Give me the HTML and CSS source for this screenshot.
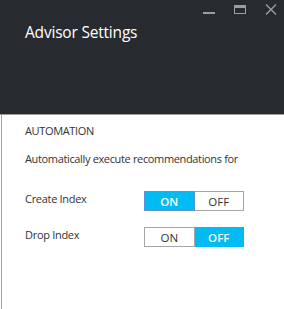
FILE: index.html
```html
<!DOCTYPE html>
<html>
<head>
<meta charset="utf-8">
<link rel="stylesheet" href="styles.css">
</head>
<body>
<div class="blade">
  <header class="head">
    <div class="controls">
      <svg class="ctl" width="14" height="16" viewBox="0 0 14 16"><rect x="1" y="12" width="12" height="2" fill="#9a9da1"/></svg>
      <svg class="ctl" width="14" height="16" viewBox="0 0 14 16"><rect x="1.5" y="5.5" width="11" height="8" fill="none" stroke="#9a9da1"/><rect x="1" y="5" width="12" height="3" fill="#9a9da1"/></svg>
      <svg class="ctl" width="14" height="16" viewBox="0 0 14 16"><path d="M2 4.5 L12 14.5 M12 4.5 L2 14.5" stroke="#9a9da1" stroke-width="1.4"/></svg>
    </div>
    <h1 class="title">Advisor Settings</h1>
  </header>
  <main class="content">
    <div class="section">AUTOMATION</div>
    <p class="desc">Automatically execute recommendations for</p>
    <div class="row">
      <span class="label">Create Index</span>
      <div class="toggle">
        <span class="opt on focus">ON</span>
        <span class="opt">OFF</span>
      </div>
    </div>
    <div class="row">
      <span class="label">Drop Index</span>
      <div class="toggle">
        <span class="opt">ON</span>
        <span class="opt on">OFF</span>
      </div>
    </div>
  </main>
</div>
</body>
</html>
```
FILE: styles.css
```css
html, body {
  margin: 0;
  padding: 0;
  background: #fff;
}
body {
  font-family: "Open Sans", "Noto Sans", sans-serif;
  width: 284px;
  height: 309px;
  overflow: hidden;
}
.blade {
  height: 309px;
  margin-left: 1px;
  border-left: 1px solid #a3a3a3;
  display: flex;
  flex-direction: column;
}
.head {
  background: #272b30;
  height: 114px;
  margin-left: -2px;
  padding-left: 2px;
  border-bottom: 1px solid #9c9c9c;
  box-sizing: content-box;
  position: relative;
}
.controls {
  position: absolute;
  top: 0;
  right: 6px;
  display: flex;
  gap: 17px;
}
.ctl { display: block; }
.title {
  margin: 0;
  padding: 21px 0 0 23px;
  font-size: 15.5px;
  font-weight: 400;
  color: #fff;
  letter-spacing: -0.2px;
}
.content {
  padding: 8px 0 0 23px;
  color: #333;
  font-size: 11px;
}
.section {
  line-height: 16px;
  letter-spacing: -0.35px;
}
.desc {
  margin: 12px 0 0 0;
  line-height: 16px;
  letter-spacing: -0.35px;
}
.row {
  display: flex;
  align-items: flex-start;
  margin-top: 24px;
}
.row + .row { margin-top: 16px; }
.label {
  width: 119px;
  line-height: 16px;
  letter-spacing: -0.3px;
}
.toggle {
  display: flex;
  width: 100px;
  height: 20px;
}
.opt {
  flex: 1;
  box-sizing: border-box;
  border: 1px solid #a6a6a6;
  display: flex;
  align-items: center;
  justify-content: center;
  font-size: 11.5px;
  color: #333;
}
.opt + .opt { border-left: none; }
.opt.on {
  background: #00bcf2;
  border-color: #00bcf2;
  color: #fff;
  font-weight: 600;
}
.opt.on.focus { border-color: #5b8fd6; }
```
